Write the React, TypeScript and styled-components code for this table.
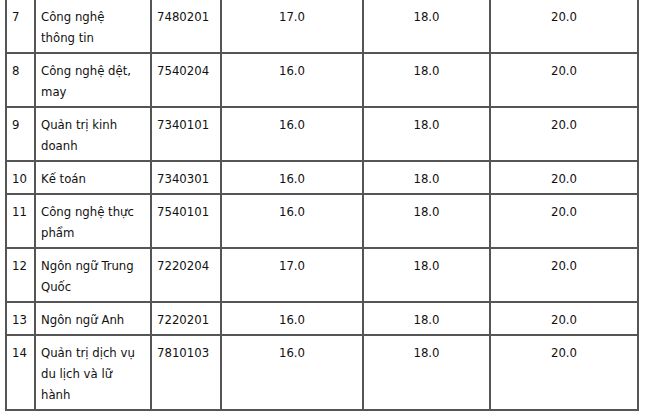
import React from "react";
import styled, { createGlobalStyle } from "styled-components";

const Global = createGlobalStyle`
  html, body { margin: 0; padding: 0; background: #fff; }
  body { font-family: "DejaVu Sans", Verdana, sans-serif; }
`;

const Page = styled.div`
  padding: 0 0 0 5px;
  margin-top: -2px;
`;

const Table = styled.table`
  border-collapse: collapse;
  table-layout: fixed;
  width: 634px;
  font-family: "DejaVu Sans", Verdana, sans-serif;
  font-stretch: condensed;
  font-size: 13px;
  line-height: 21px;
  color: #111;
`;

const Cell = styled.td<{ $align?: "left" | "center" }>`
  border: 2px solid #555;
  padding: 6px 5px 4px 5px;
  vertical-align: top;
  text-align: ${(p) => p.$align ?? "left"};
  white-space: nowrap;
`;

type Row = { n: string; name: string[]; code: string; a: string; b: string; c: string };

const rows: Row[] = [
  { n: "7", name: ["Công nghệ", "thông tin"], code: "7480201", a: "17.0", b: "18.0", c: "20.0" },
  { n: "8", name: ["Công nghệ dệt,", "may"], code: "7540204", a: "16.0", b: "18.0", c: "20.0" },
  { n: "9", name: ["Quản trị kinh", "doanh"], code: "7340101", a: "16.0", b: "18.0", c: "20.0" },
  { n: "10", name: ["Kế toán"], code: "7340301", a: "16.0", b: "18.0", c: "20.0" },
  { n: "11", name: ["Công nghệ thực", "phẩm"], code: "7540101", a: "16.0", b: "18.0", c: "20.0" },
  { n: "12", name: ["Ngôn ngữ Trung", "Quốc"], code: "7220204", a: "17.0", b: "18.0", c: "20.0" },
  { n: "13", name: ["Ngôn ngữ Anh"], code: "7220201", a: "16.0", b: "18.0", c: "20.0" },
  { n: "14", name: ["Quản trị dịch vụ", "du lịch và lữ", "hành"], code: "7810103", a: "16.0", b: "18.0", c: "20.0" },
];

const widths = [29, 116, 70, 142, 127, 148];

export default function App() {
  return (
    <>
      <Global />
      <Page>
        <Table>
          <colgroup>
            {widths.map((w, i) => (
              <col key={i} style={{ width: w }} />
            ))}
          </colgroup>
          <tbody>
            {rows.map((r) => (
              <tr key={r.n}>
                <Cell>{r.n}</Cell>
                <Cell>
                  {r.name.map((l, i) => (
                    <React.Fragment key={i}>
                      {i > 0 && <br />}
                      {l}
                    </React.Fragment>
                  ))}
                </Cell>
                <Cell>{r.code}</Cell>
                <Cell $align="center">{r.a}</Cell>
                <Cell $align="center">{r.b}</Cell>
                <Cell $align="center">{r.c}</Cell>
              </tr>
            ))}
          </tbody>
        </Table>
      </Page>
    </>
  );
}
